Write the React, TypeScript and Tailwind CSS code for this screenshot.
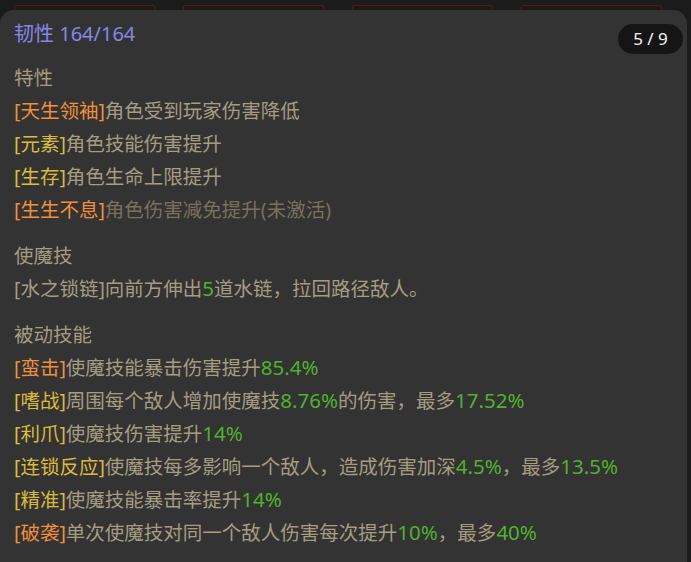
import React from 'react';

type Seg = { t: string; c?: 'o' | 'y' | 'g' | 'd' | 'b' };

const color: Record<string, string> = {
  o: 'text-[#f0903a]',
  y: 'text-[#dcbb3c]',
  g: 'text-[#4fb22c] text-[20.5px]',
  d: 'text-[#7b705c]',
  b: 'text-[#a69c80]',
};

const Line = ({ segs }: { segs: Seg[] }) => (
  <div className="h-[33px] leading-[33px] whitespace-nowrap">
    {segs.map((s, i) => (
      <span key={i} className={color[s.c ?? 'b']}>
        {s.t}
      </span>
    ))}
  </div>
);

const Section = ({ title, lines, gap }: { title: string; lines: Seg[][]; gap: string }) => (
  <div className={gap}>
    <div className="h-[33px] leading-[33px] text-[#a69c80]">{title}</div>
    {lines.map((l, i) => (
      <Line key={i} segs={l} />
    ))}
  </div>
);

export default function App() {
  const traits: Seg[][] = [
    [{ t: '[天生领袖]', c: 'o' }, { t: '角色受到玩家伤害降低' }],
    [{ t: '[元素]', c: 'y' }, { t: '角色技能伤害提升' }],
    [{ t: '[生存]', c: 'y' }, { t: '角色生命上限提升' }],
    [{ t: '[生生不息]', c: 'o' }, { t: '角色伤害减免提升(未激活)', c: 'd' }],
  ];
  const skill: Seg[][] = [
    [{ t: '[水之锁链]向前方伸出' }, { t: '5', c: 'g' }, { t: '道水链，拉回路径敌人。' }],
  ];
  const passive: Seg[][] = [
    [{ t: '[蛮击]', c: 'o' }, { t: '使魔技能暴击伤害提升' }, { t: '85.4%', c: 'g' }],
    [
      { t: '[嗜战]', c: 'y' },
      { t: '周围每个敌人增加使魔技' },
      { t: '8.76%', c: 'g' },
      { t: '的伤害，最多' },
      { t: '17.52%', c: 'g' },
    ],
    [{ t: '[利爪]', c: 'y' }, { t: '使魔技伤害提升' }, { t: '14%', c: 'g' }],
    [
      { t: '[连锁反应]', c: 'y' },
      { t: '使魔技每多影响一个敌人，造成伤害加深' },
      { t: '4.5%', c: 'g' },
      { t: '，最多' },
      { t: '13.5%', c: 'g' },
    ],
    [{ t: '[精准]', c: 'y' }, { t: '使魔技能暴击率提升' }, { t: '14%', c: 'g' }],
    [
      { t: '[破袭]', c: 'o' },
      { t: '单次使魔技对同一个敌人伤害每次提升' },
      { t: '10%', c: 'g' },
      { t: '，最多' },
      { t: '40%', c: 'g' },
    ],
  ];

  return (
    <div
      className="h-[562px] w-[691px] overflow-hidden bg-[#1b1b1b]"
      style={{ fontFamily: '"Noto Sans", "Noto Sans CJK SC", sans-serif' }}
    >
      {/* cards peeking above the tooltip */}
      <div className="flex h-[10px] gap-[28px] overflow-hidden pl-[14px] pt-[5px]">
        {[0, 1, 2, 3].map((i) => (
          <div
            key={i}
            className="h-[12px] w-[141px] rounded-t-[2px] border border-[#45201a] bg-[#201716]"
          />
        ))}
      </div>

      <div className="relative h-[552px] w-[687px] rounded-t-[14px] bg-[#333333] pl-[14px] pt-[7px] text-[19.5px]">
        <div className="h-[33px] leading-[33px] text-[20px] text-[#8787e6]">韧性 164/164</div>

        <Section title="特性" lines={traits} gap="mt-[11px]" />
        <Section title="使魔技" lines={skill} gap="mt-[13px]" />
        <Section title="被动技能" lines={passive} gap="mt-[13px]" />

        <div className="absolute right-[4px] top-[14px] flex h-[30px] w-[65px] items-center justify-center rounded-full bg-[#151515] text-[17px] text-[#f2f2f2]">
          5 / 9
        </div>
      </div>
    </div>
  );
}
